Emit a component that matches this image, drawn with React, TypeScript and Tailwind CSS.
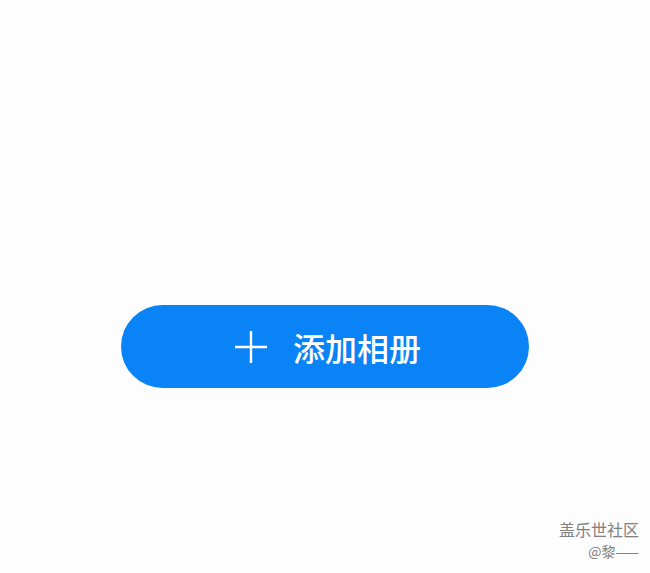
import React from "react";

export default function App() {
  return (
    <div
      className="relative w-[650px] h-[573px] bg-[#fdfdfd] flex flex-col items-center pt-[305px]"
      style={{ fontFamily: '"Noto Sans CJK SC", "Noto Sans", sans-serif' }}
    >
      <button className="w-[408px] h-[83px] rounded-full bg-[#0a83f6] flex items-center justify-center text-white pl-[4px]">
        <svg width="36" height="36" viewBox="0 0 36 36" className="mr-[24px]">
          <path d="M18 2 V34 M2 18 H34" stroke="white" strokeWidth="2.4" fill="none" />
        </svg>
        <span className="text-[32px] font-medium leading-none">添加相册</span>
      </button>
      <div className="absolute right-[11px] bottom-[14px] flex flex-col items-end text-[#808080]">
        <span className="text-[16px] leading-[18px]">盖乐世社区</span>
        <span className="text-[14px] leading-[16px] mt-[5px]">@黎——</span>
      </div>
    </div>
  );
}
